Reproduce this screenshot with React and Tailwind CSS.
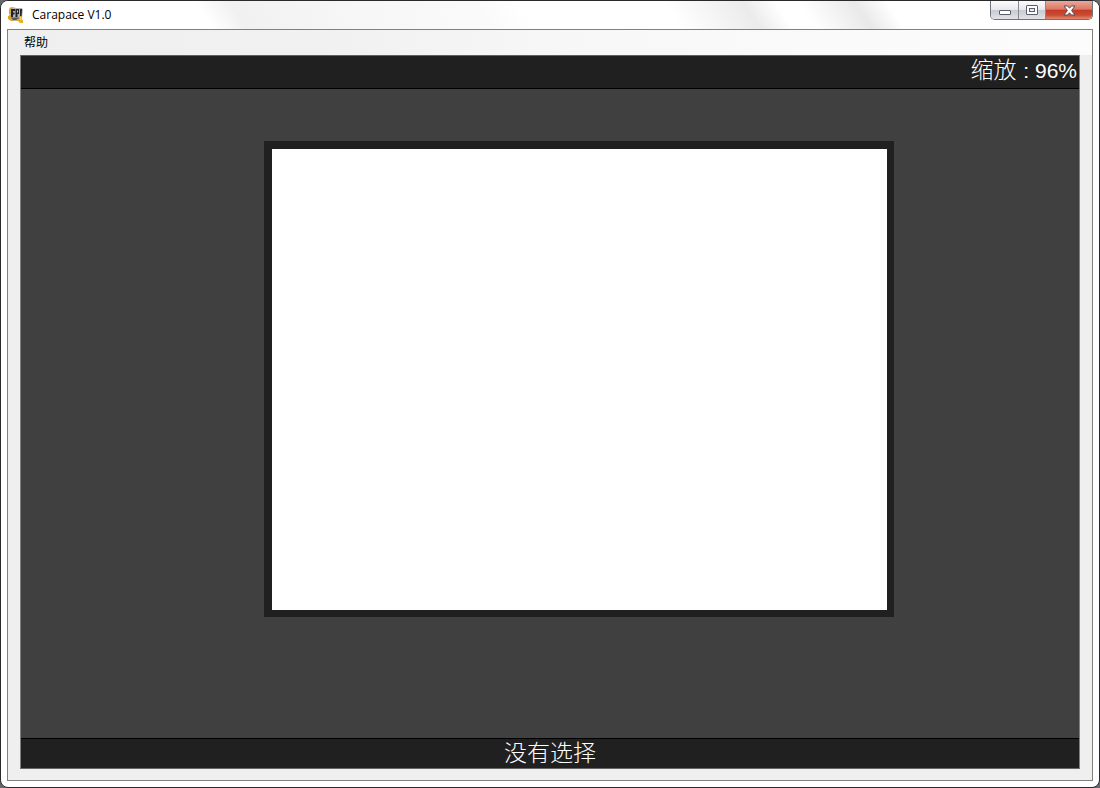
import React from "react";

function AppIcon() {
  return (
    <svg width="16" height="16" viewBox="0 0 16 16" aria-hidden="true">
      <path d="M2 1 5 0l3 1h6l1 2-1 8-2 3H5L1 11Z" fill="#b4b5b6" />
      <path d="M1 2 3 0l2 1-2 2v4H1Z" fill="#d9a436" />
      <path d="M0 9 3 8l1 3 2 3H3L0 12Z" fill="#dda42a" />
      <path d="M3 2h4v2H5v1.500h1.500v2H5V10H3ZM7.500 2H11v5H9.500v3h-2ZM12 2h2l-.5 8H12Z" fill="#222227" />
      <path d="M9 3.500h1v2H9Z" fill="#d8d8d0" />
      <path d="M3 10.500h8L10 13H5Z" fill="#55575c" />
      <path d="m11 9 3 0-1 3 2 1v3h-3l-2-2-2 0 1-2 2 0Z" fill="#e8ae27" />
      <path d="M12 10h1v3h-1Z" fill="#f5d060" />
    </svg>
  );
}

function WindowButtons() {
  return (
    <div className="flex h-[19px] w-[103px] shrink-0 overflow-hidden rounded-b-[5px] border border-t-0 border-[#6e737b]">
      <button
        type="button"
        aria-label="Minimize"
        className="flex w-7 items-center justify-center border-r border-[#858992] bg-[linear-gradient(#fcfcfd_0%,#e7e8eb_48%,#c8cad0_50%,#e2e3e7_100%)] pt-1"
      >
        <svg width="14" height="7" viewBox="0 0 14 7" aria-hidden="true">
          <rect x="1.500" y="1.500" width="11" height="4" rx="0.500" fill="#fff" stroke="#5b5e6c" />
        </svg>
      </button>
      <button
        type="button"
        aria-label="Maximize"
        className="flex w-[27px] items-center justify-center border-r border-[#858992] bg-[linear-gradient(#fcfcfd_0%,#e7e8eb_48%,#c8cad0_50%,#e2e3e7_100%)]"
      >
        <svg width="12" height="10" viewBox="0 0 12 10" aria-hidden="true">
          <rect x="0.500" y="0.500" width="11" height="9" rx="0.500" fill="#fff" stroke="#5b5e6c" />
          <rect x="3.500" y="3.500" width="5" height="3" fill="#e9eaed" stroke="#5b5e6c" />
        </svg>
      </button>
      <button
        type="button"
        aria-label="Close"
        className="flex flex-1 items-center justify-center bg-[linear-gradient(#eaa899_0%,#dd7765_46%,#c33c25_50%,#cb4b31_78%,#e18a70_100%)]"
      >
        <svg width="13" height="11" viewBox="0 0 13 11" aria-hidden="true">
          <path
            d="M1 1h3.700l1.800 2.200L8.300 1H12L8.600 5.500 12 10H8.300L6.500 7.800 4.700 10H1l3.400-4.500Z"
            fill="#fff"
            stroke="#614653"
            strokeLinejoin="round"
          />
        </svg>
      </button>
    </div>
  );
}

function TitleBar() {
  return (
    <header className="flex h-7 items-start justify-between bg-[linear-gradient(56deg,#fff_19%,#f1f1f1_22%,#f7f7f7_33%,#fafafa_44%,#fff_48%,#fff_61%,#ebebeb_68%,#fff_71%,#fff_73%,#e9e9e9_78%,#fff_81%)] pr-[6px] pl-[7px]">
      <div className="flex items-center gap-2 pt-[5px]">
        <AppIcon />
        <h1 className="text-[12px] leading-[18px] text-black">Carapace V1.0</h1>
      </div>
      <WindowButtons />
    </header>
  );
}

export default function App() {
  return (
    <div className="min-h-screen bg-[#66696b] font-['Open_Sans','Noto_Sans_CJK_SC',sans-serif]">
      <div className="flex min-h-screen flex-col overflow-hidden rounded-lg border border-[#2b292b] bg-white">
        <TitleBar />
        <div className="mx-[6px] mb-[6px] flex flex-1 flex-col border border-[#80807c] bg-[#efefef]">
          <nav className="flex h-[25px] items-center bg-[linear-gradient(90deg,#efefef_0%,#f1f1f1_30%,#f8f8f8_55%,#fcfcfc_100%)] pl-4">
            <button type="button" className="text-[12px] leading-[18px] text-black">
              帮助
            </button>
          </nav>
          <main className="mx-3 mb-[11px] flex flex-1 flex-col border border-t-[#606060] border-r-[#808080] border-b-[#666] border-l-[#808080] bg-[#404040] font-light text-white">
            <div className="flex h-[33px] items-start justify-end border-b border-black bg-[#202020] pr-[2px]">
              <output className="flex gap-px">
                <span className="font-['Noto_Sans_CJK_SC',sans-serif] text-[23px] leading-6">缩放</span>
                <span className="font-['Liberation_Sans',sans-serif] text-[21px] leading-[30px] whitespace-pre">
                  {" : 96%"}
                </span>
              </output>
            </div>
            <section
              aria-label="Canvas"
              className="flex flex-1 pt-[52px] pr-[185px] pb-[121px] pl-[243px]"
            >
              <div className="flex-1 border-8 border-r-[7px] border-b-[7px] border-[#202020] bg-white" />
            </section>
            <footer className="flex h-[30px] items-start justify-center border-t border-black bg-[#202020]">
              <p className="font-['Noto_Sans_CJK_SC',sans-serif] text-[23px] leading-6">没有选择</p>
            </footer>
          </main>
        </div>
      </div>
    </div>
  );
}
